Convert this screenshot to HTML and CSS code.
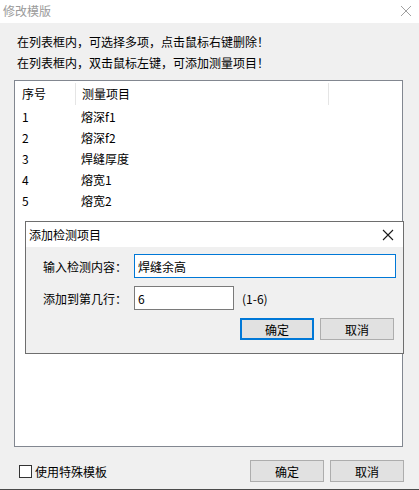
FILE: index.html
```html
<!DOCTYPE html>
<html lang="zh-CN">
<head>
  <meta charset="UTF-8" />
  <title>修改模版</title>
  <link rel="stylesheet" href="styles.css">
</head>
<body>
  <div class="janela">
    <div class="titulo">
      <span class="titulo-texto">修改模版</span>
      <svg class="fechar" width="12" height="12" viewBox="0 0 12 12">
        <path d="M1 1 L11 11 M11 1 L1 11" stroke="#a0a0a0" stroke-width="1" fill="none" />
      </svg>
    </div>

    <div class="conteudo">
      <p class="dica">在列表框内，可选择多项，点击鼠标右键删除！</p>
      <p class="dica">在列表框内，双击鼠标左键，可添加测量项目！</p>

      <div class="lista">
        <div class="cabecalho">
          <div class="col-num">序号</div>
          <div class="col-nome">测量项目</div>
          <div class="col-resto"></div>
        </div>
        <div id="linhas"></div>
      </div>

      <div class="rodape">
        <label class="check"><span class="caixa"></span>使用特殊模板</label>
        <div class="botoes">
          <button class="btn">确定</button>
          <button class="btn">取消</button>
        </div>
      </div>
    </div>

    <div class="dialogo">
      <div class="dialogo-titulo">
        <span>添加检测项目</span>
        <svg class="fechar" width="12" height="12" viewBox="0 0 12 12">
          <path d="M1 1 L11 11 M11 1 L1 11" stroke="#1a1a1a" stroke-width="1.1" fill="none" />
        </svg>
      </div>
      <div class="dialogo-corpo">
        <div class="campo">
          <label>输入检测内容：</label>
          <input type="text" class="entrada ativa" value="焊缝余高">
        </div>
        <div class="campo">
          <label>添加到第几行：</label>
          <input type="text" class="entrada curta" value="6">
          <span class="faixa">(1-6)</span>
        </div>
        <div class="dialogo-botoes">
          <button class="btn btn-padrao">确定</button>
          <button class="btn">取消</button>
        </div>
      </div>
    </div>
  </div>

  <script>
    const itens = ['熔深f1', '熔深f2', '焊缝厚度', '熔宽1', '熔宽2'];
    const linhas = document.getElementById('linhas');
    itens.forEach((nome, i) => {
      const div = document.createElement('div');
      div.className = 'linha';
      div.innerHTML = `<div class="col-num">${i + 1}</div><div class="col-nome">${nome}</div>`;
      linhas.appendChild(div);
    });
  </script>
</body>
</html>
```

FILE: styles.css
```css
body {
  margin: 0;
  font-family: "Noto Sans CJK SC", "Noto Sans", sans-serif;
  font-size: 12px;
  color: #000;
}
.janela {
  position: relative;
  width: 419px;
  height: 490px;
  background: #f0f0f0;
  box-sizing: border-box;
  border-bottom: 1px solid #4a4a4a;
  overflow: hidden;
}
.titulo {
  height: 23px;
  background: #fff;
  display: flex;
  align-items: center;
  justify-content: space-between;
  padding: 0 7px 2px 3px;
  box-sizing: border-box;
}
.titulo-texto {
  color: #9a9a9a;
}
.conteudo {
  padding: 8px 16px 0 14px;
}
.dica {
  margin: 0;
  line-height: 21px;
  padding-left: 3px;
}
.lista {
  margin-top: 7px;
  height: 367px;
  box-sizing: border-box;
  border: 1px solid #828790;
  background: #fff;
}
.cabecalho {
  display: flex;
  height: 25px;
  align-items: center;
}
.cabecalho .col-num,
.cabecalho .col-nome {
  border-right: 1px solid #e5e5e5;
  height: 22px;
  line-height: 22px;
}
.col-num {
  width: 53px;
  padding-left: 7px;
}
.col-nome {
  width: 246px;
  padding-left: 6px;
}
.linha {
  display: flex;
  height: 21px;
  line-height: 21px;
}
.rodape {
  margin-top: 13px;
  display: flex;
  justify-content: space-between;
  align-items: center;
}
.check {
  display: flex;
  align-items: center;
  gap: 3px;
  padding-left: 5px;
}
.caixa {
  width: 11px;
  height: 11px;
  border: 1px solid #333;
  background: #fff;
}
.botoes {
  display: flex;
  gap: 6px;
  margin-right: -1px;
}
.btn {
  width: 74px;
  height: 22px;
  padding: 0;
  background: #e1e1e1;
  border: 1px solid #adadad;
  font-family: inherit;
  font-size: 12px;
  color: #000;
}
.btn-padrao {
  border: 2px solid #0078d7;
}

/* janela sobreposta */
.dialogo {
  position: absolute;
  left: 25px;
  top: 221px;
  width: 379px;
  height: 133px;
  box-sizing: border-box;
  border: 1px solid #6e6e6e;
  background: #f0f0f0;
}
.dialogo-titulo {
  height: 25px;
  background: #fff;
  display: flex;
  align-items: center;
  justify-content: space-between;
  padding: 0 9px 0 3px;
}
.dialogo-corpo {
  padding: 7px 7px 0 17px;
}
.campo {
  display: flex;
  align-items: center;
  height: 24px;
  margin-bottom: 8px;
}
.campo label {
  width: 91px;
}
.entrada {
  height: 24px;
  box-sizing: border-box;
  border: 1px solid #7a7a7a;
  background: #fff;
  font-family: inherit;
  font-size: 12px;
  padding: 0 3px;
  margin: 0;
}
.entrada.ativa {
  width: 262px;
  border-color: #0078d7;
}
.entrada.curta {
  width: 100px;
}
.faixa {
  margin-left: 8px;
}
.dialogo-botoes {
  display: flex;
  justify-content: flex-end;
  gap: 6px;
  margin-top: 3px;
  padding-right: 2px;
}
```
